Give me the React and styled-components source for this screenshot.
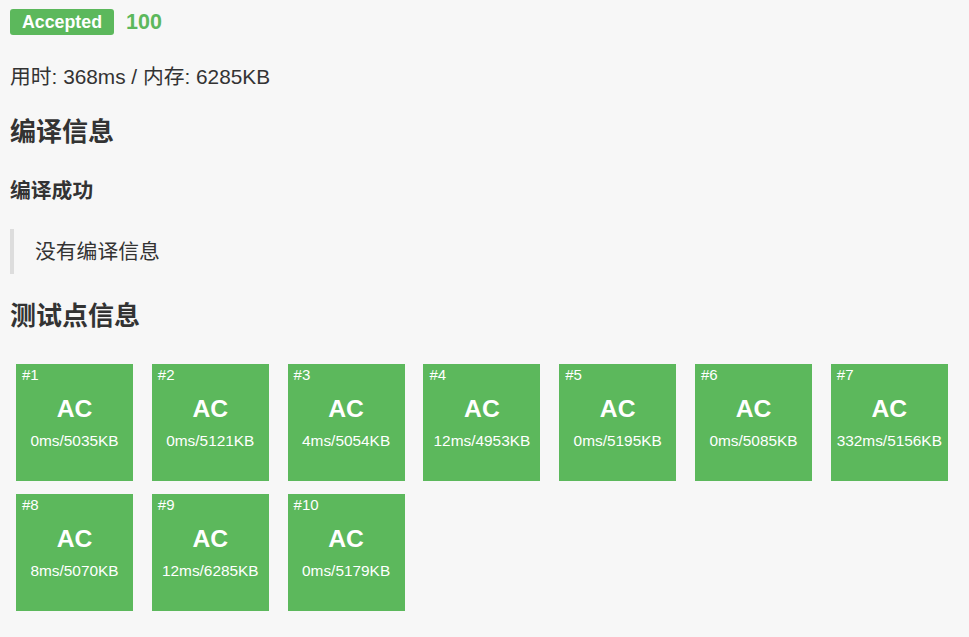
import React from "react";
import styled, { createGlobalStyle } from "styled-components";

const GlobalStyle = createGlobalStyle`
  body {
    margin: 0;
    background: #f7f7f7;
    color: #333;
    font-family: "Liberation Sans", "Noto Sans CJK SC", sans-serif;
  }
`;

const Page = styled.div`
  padding: 9px 10px 20px;
`;

const StatusRow = styled.div`
  display: flex;
  align-items: center;
  gap: 12px;
  height: 26px;
`;

const Badge = styled.span`
  display: inline-flex;
  align-items: center;
  height: 26px;
  padding: 0 12px;
  border-radius: 3px;
  background: #5cb85c;
  color: #fff;
  font-weight: bold;
  font-size: 17.8px;
`;

const Score = styled.span`
  color: #5cb85c;
  font-weight: bold;
  font-size: 21.5px;
`;

const Stats = styled.p`
  margin: 25.5px 0 0;
  font-size: 20.8px;
  line-height: 31px;
`;

const Heading = styled.h3`
  margin: ${(p) => p.$top}px 0 0;
  font-size: 26px;
  line-height: 31.2px;
  font-weight: bold;
`;

const SubHeading = styled.h4`
  margin: 30px 0 0;
  font-size: 20.8px;
  line-height: 25px;
  font-weight: bold;
`;

const Quote = styled.blockquote`
  margin: 26.5px 0 0;
  padding: 7px 0 7px 21px;
  border-left: 4px solid #ddd;
  font-size: 20.8px;
  line-height: 31px;
`;

const Grid = styled.div`
  display: flex;
  flex-wrap: wrap;
  column-gap: 18.8px;
  row-gap: 13px;
  margin-top: 32.4px;
  padding-left: 6px;
  width: 940px;
`;

const Tile = styled.div`
  position: relative;
  width: 117px;
  height: 117px;
  background: #5cb85c;
  color: #fff;
  display: flex;
  flex-direction: column;
  align-items: center;
`;

const TileId = styled.span`
  position: absolute;
  top: 2px;
  left: 6px;
  font-size: 15px;
  line-height: 18px;
`;

const Verdict = styled.div`
  margin-top: 30px;
  font-size: 24.7px;
  font-weight: bold;
  line-height: 30px;
`;

const Usage = styled.div`
  margin-top: 8px;
  font-size: 15.4px;
  line-height: 18px;
  white-space: nowrap;
`;

const cases = [
  ["0ms", "5035KB"],
  ["0ms", "5121KB"],
  ["4ms", "5054KB"],
  ["12ms", "4953KB"],
  ["0ms", "5195KB"],
  ["0ms", "5085KB"],
  ["332ms", "5156KB"],
  ["8ms", "5070KB"],
  ["12ms", "6285KB"],
  ["0ms", "5179KB"],
];

export default function App() {
  return (
    <Page>
      <GlobalStyle />
      <StatusRow>
        <Badge>Accepted</Badge>
        <Score>100</Score>
      </StatusRow>
      <Stats>用时: 368ms / 内存: 6285KB</Stats>
      <Heading $top={25}>编译信息</Heading>
      <SubHeading>编译成功</SubHeading>
      <Quote>没有编译信息</Quote>
      <Heading $top={26.4}>测试点信息</Heading>
      <Grid>
        {cases.map(([time, mem], i) => (
          <Tile key={i}>
            <TileId>#{i + 1}</TileId>
            <Verdict>AC</Verdict>
            <Usage>
              {time}/{mem}
            </Usage>
          </Tile>
        ))}
      </Grid>
    </Page>
  );
}
